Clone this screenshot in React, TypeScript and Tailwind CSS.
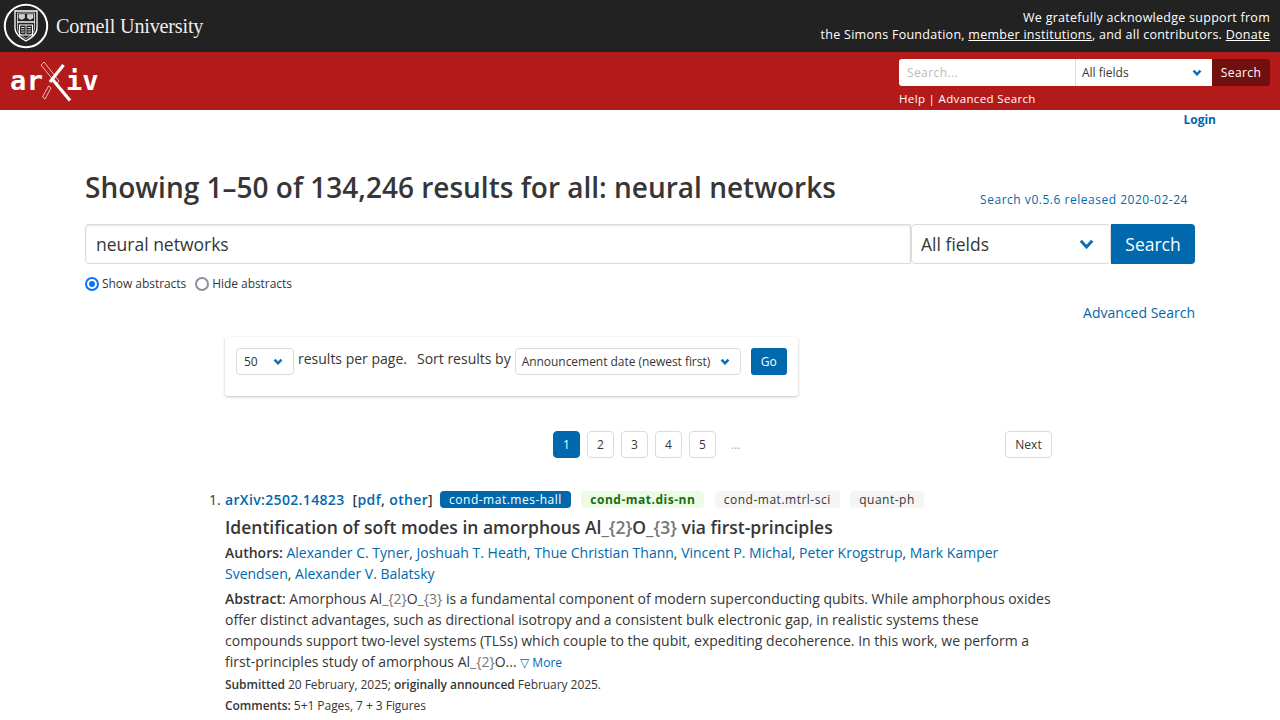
const link = 'text-[#0068ac]';

function Chevron({ w, h, sw }: { w: number; h: number; sw: number }) {
  return (
    <svg width={w} height={h} viewBox={`0 0 ${w} ${h}`} fill="none" stroke="#0e6fb8" strokeWidth={sw} className="shrink-0">
      <path d={`M${sw / 2 + 0.3} ${sw / 2 + 0.3}L${w / 2} ${h - sw / 2 - 0.5}L${w - sw / 2 - 0.3} ${sw / 2 + 0.3}`} />
    </svg>
  );
}

function CornellSeal() {
  return (
    <svg width="46" height="46" viewBox="0 0 46 46" fill="none" stroke="#fff" className="shrink-0">
      <circle cx="23" cy="23" r="21.2" strokeWidth="2" />
      <path d="M12 8h22v17c0 6-5 9.500-11 13-6-3.500-11-7-11-13z" strokeWidth="1.300" />
      <path d="M14.500 10h17v15c0 4.500-3.500 7.500-8.500 10.500-5-3-8.500-6-8.500-10.500z" strokeWidth="0.7" />
      <path d="M14 19h18" strokeWidth="1.400" />
      <path d="M16 11.500h5.500v3.500l-2.750 1.500-2.750-1.500zM24.500 11.500h5.500v3.500l-2.750 1.500-2.750-1.500z" fill="#ccc" strokeWidth="0.5" />
      <path d="M16.500 22h13v10h-13z" strokeWidth="1.100" />
      <path d="M23 22v10M18 24.500h3.500M18 26.800h3.500M18 29.100h3.500M24.500 24.500h3.500M24.500 26.800h3.500M24.500 29.100h3.500" strokeWidth="0.8" />
    </svg>
  );
}

function ArxivLogo() {
  return (
    <div className="relative h-[58px] w-[88px]">
      <span className="absolute left-[-1px] top-[12px] font-['DejaVu_Sans_Mono',monospace] text-[27px] font-bold leading-[34px] tracking-[0.5px] text-white">ar</span>
      <span className="absolute left-[55px] top-[12px] font-['DejaVu_Sans_Mono',monospace] text-[27px] font-bold leading-[34px] text-white">iv</span>
      <svg width="36" height="44" viewBox="0 0 36 44" fill="none" className="absolute left-[29px] top-[8px]">
        <path d="M1 5 4 2 19 21 16.500 24z" fill="#b31b1b" stroke="#fff" strokeWidth="0.7" />
        <path d="M8.500 26 11 28 5 39 2.500 37z" stroke="#fff" strokeWidth="0.7" />
        <path d="M23.500 5 10 22" stroke="#fff" strokeWidth="3.200" />
        <path d="M13 20 30 40.500" stroke="#fff" strokeWidth="3.200" />
      </svg>
    </div>
  );
}

function Pill({ className, children }: { className: string; children: string }) {
  return <span className={`rounded-[4px] px-[9px] text-[12px] leading-[17px] tracking-[0.5px] ${className}`}>{children}</span>;
}

function PageBtn({ n, active }: { n: string; active?: boolean }) {
  return (
    <span
      className={`flex h-[27px] w-[27px] items-center justify-center rounded-[4px] border text-[12px] ${
        active ? 'border-[#0068ac] bg-[#0068ac] text-white' : 'border-[#dbdbdb] text-[#363636]'
      }`}
    >
      {n}
    </span>
  );
}

const authors = ['Alexander C. Tyner', 'Joshuah T. Heath', 'Thue Christian Thann', 'Vincent P. Michal', 'Peter Krogstrup', 'Mark Kamper Svendsen', 'Alexander V. Balatsky'];

export default function App() {
  return (
    <div className="h-[720px] w-[1280px] overflow-hidden bg-white font-['Open_Sans','Noto_Sans',sans-serif] text-[#363636]">
      <header className="flex h-[52px] items-center justify-between bg-[#222] pl-[3px] pr-[10px]">
        <div className="flex items-center gap-[7px]">
          <CornellSeal />
          <span className="font-['Liberation_Serif',serif] text-[20.200px] tracking-[-0.2px] text-[#eee]">Cornell University</span>
        </div>
        <div className="text-right text-[12.500px] font-medium leading-[17px] tracking-[0.27px] text-white">
          <div>We gratefully acknowledge support from</div>
          <div>
            the Simons Foundation, <span className="underline">member institutions</span>, and all contributors. <span className="underline">Donate</span>
          </div>
        </div>
      </header>

      <div className="flex h-[58px] justify-between bg-[#b31b1b] pl-[11px] pr-[10px]">
        <ArxivLogo />
        <div className="pt-[7px]">
          <div className="flex h-[27px] w-[371px] text-[12px]">
            <div className="flex w-[177px] items-center rounded-l-[3px] border-r border-[#ddd] bg-white pl-2 tracking-[0.4px] text-[#bbb]">Search...</div>
            <div className="flex w-[136px] items-center justify-between bg-white pl-[6px] pr-[10px] text-[#363636]">
              All fields
              <Chevron w={10} h={7} sw={2.500} />
            </div>
            <div className="flex w-[58px] items-center justify-center rounded-r-[3px] bg-[#721010] tracking-[0.4px] text-white">Search</div>
          </div>
          <div className="mt-[5px] text-[11.500px] leading-[16px] tracking-[0.35px] text-white">Help | Advanced Search</div>
        </div>
      </div>

      <div className="pr-[64px] pt-[1px] text-right text-[12px] font-bold leading-[18px] text-[#0068ac]">Login</div>

      <main className="px-[85px]">
        <div className="mt-[39px] flex items-end justify-between">
          <h1 className="text-[28px] font-semibold leading-[38px] text-[#363636]">Showing 1–50 of 134,246 results for all: neural networks</h1>
          <span className={`mb-[-3px] mr-[7px] text-[12px] tracking-[0.52px] ${link}`}>Search v0.5.6 released 2020-02-24</span>
        </div>

        <div className="mt-[18px] flex h-[40px] text-[17.500px]">
          <div className="flex flex-1 items-center rounded-l-[4px] border border-[#dbdbdb] pl-[10px] shadow-[inset_0_1px_2px_rgba(10,10,10,0.1)]">neural networks</div>
          <div className="flex w-[200px] items-center justify-between rounded-[4px] border border-[#dbdbdb] pl-[9px] pr-[16px]">
            All fields
            <Chevron w={15} h={10} sw={3} />
          </div>
          <div className="flex w-[84px] items-center justify-center rounded-r-[4px] bg-[#0068ac] text-white">Search</div>
        </div>

        <div className="mt-[11px] flex items-center text-[12px] leading-[18px] tracking-[-0.05px]">
          <span className="mr-[3px] h-[14px] w-[14px] rounded-full border-[2px] border-[#0a75f0] p-[2px]">
            <span className="block h-full w-full rounded-full bg-[#0a75f0]" />
          </span>
          Show abstracts
          <span className="ml-[9px] mr-[3px] h-[14px] w-[14px] rounded-full border-[2px] border-[#8f8f9d]" />
          Hide abstracts
        </div>

        <div className={`mt-[9px] text-right text-[14px] leading-[21px] ${link}`}>Advanced Search</div>

        <div className="ml-[140px] mt-[14px] flex h-[59px] w-[573px] items-start rounded-[3px] pl-[11px] pt-[11px] shadow-[0_1px_3px_rgba(10,10,10,0.25)]">
          <div className="flex h-[27px] w-[58px] items-center justify-between rounded-[4px] border border-[#dbdbdb] pl-[7px] pr-[10px] text-[12px]">
            50
            <Chevron w={10} h={7} sw={2.500} />
          </div>
          <span className="ml-1 text-[14px] leading-[21px]">results per page.</span>
          <span className="ml-[10px] text-[14px] leading-[21px]">Sort results by</span>
          <div className="ml-[4px] flex h-[27px] w-[226px] items-center justify-between rounded-[4px] border border-[#dbdbdb] pl-[6px] pr-[10px] text-[12px] tracking-[-0.04px]">
            Announcement date (newest first)
            <Chevron w={10} h={7} sw={2.500} />
          </div>
          <span className="ml-[10px] flex h-[27px] w-[36px] items-center justify-center rounded-[3px] bg-[#0068ac] text-[12px] text-white">Go</span>
        </div>

        <div className="ml-[468px] mt-[35px] flex h-[27px] w-[499px] items-center text-[12px]">
          <div className="flex gap-[7px]">
            <PageBtn n="1" active />
            <PageBtn n="2" />
            <PageBtn n="3" />
            <PageBtn n="4" />
            <PageBtn n="5" />
          </div>
          <span className="ml-[15px] text-[#aaa]">…</span>
          <span className="ml-auto flex h-[27px] w-[47px] items-center justify-center rounded-[4px] border border-[#dbdbdb]">Next</span>
        </div>

        <ol className="ml-[140px] mt-[31px] w-[827px]">
          <li className="relative">
            <span className="absolute -left-[16px] top-0 text-[14px] leading-[21px]">1.</span>
            <div className="flex items-center text-[14px] font-semibold leading-[21px] tracking-[0.35px]">
              <span className={link}>arXiv:2502.14823</span>
              <span className="ml-2">
                [<span className={link}>pdf</span>, <span className={link}>other</span>]
              </span>
              <div className="ml-[7px] flex items-center gap-[10.500px]">
                <Pill className="bg-[#0068ac] font-normal text-white">cond-mat.mes-hall</Pill>
                <Pill className="bg-[#ebfbe6] font-bold text-[#1e6b0f]">cond-mat.dis-nn</Pill>
                <Pill className="bg-[#f5f5f5] font-normal text-[#363636]">cond-mat.mtrl-sci</Pill>
                <Pill className="bg-[#f5f5f5] font-normal text-[#363636]">quant-ph</Pill>
              </div>
            </div>

            <p className="mt-[4px] text-[17.500px] font-semibold leading-[26px]">
              Identification of soft modes in amorphous Al<span className="text-[#777]">_{'{2}'}</span>O<span className="text-[#777]">_{'{3}'}</span> via first-principles
            </p>

            <p className="mt-[2px] text-[14px] leading-[21px]">
              <span className="font-semibold">Authors: </span>
              {authors.map((a, i) => (
                <span key={a}>
                  <span className={link}>{a}</span>
                  {i < authors.length - 1 ? ', ' : ''}
                </span>
              ))}
            </p>

            <p className="mt-[4px] text-[14px] leading-[21px]">
              <span className="font-semibold">Abstract</span>: Amorphous Al<span className="text-[#777]">_{'{2}'}</span>O<span className="text-[#777]">_{'{3}'}</span> is a fundamental component of modern superconducting qubits. While amphorphous oxides offer distinct advantages, such as directional isotropy and a consistent bulk electronic gap, in realistic systems these compounds support two-level systems (TLSs) which couple to the qubit, expediting decoherence. In this work, we perform a first-principles study of amorphous Al<span className="text-[#777]">_{'{2}'}</span>O... <span className={`text-[12px] ${link}`}>▽ More</span>
            </p>

            <p className="mt-[3px] text-[12px] leading-[18px] tracking-[-0.05px]">
              <span className="font-semibold">Submitted</span> 20 February, 2025; <span className="font-semibold">originally announced</span> February 2025.
            </p>
            <p className="mt-[3px] text-[12px] leading-[18px] tracking-[-0.05px]">
              <span className="font-semibold">Comments:</span> 5+1 Pages, 7 + 3 Figures
            </p>
          </li>
        </ol>
      </main>
    </div>
  );
}
